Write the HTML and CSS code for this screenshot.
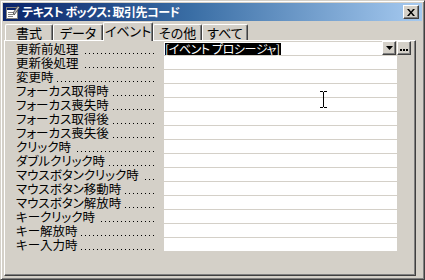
FILE: index.html
```html
<!DOCTYPE html>
<html lang="ja">
<head>
<meta charset="utf-8">
<link rel="stylesheet" href="styles.css">
</head>
<body>
<div class="window">
  <div class="titlebar">
    <svg class="ticon" width="16" height="16" viewBox="0 0 16 16">
      <rect x="2.5" y="3.5" width="11" height="11" fill="#fff" stroke="#808080"/>
      <rect x="3" y="4" width="10" height="2" fill="#0a246a"/>
      <rect x="4" y="8" width="6" height="1" fill="#808080"/>
      <rect x="4" y="10" width="7" height="1" fill="#808080"/>
      <rect x="4" y="12" width="5" height="1" fill="#808080"/>
      <path d="M9 9 L14 2 L15.5 3.5 L10.5 10.5 Z" fill="#c0c0c0" stroke="#404040" stroke-width="0.8"/>
    </svg>
    <span class="title">テキスト ボックス: 取引先コード</span>
    <div class="close">
      <svg width="8" height="7" viewBox="0 0 8 7"><path d="M0 0h2l2 2.5 2-2.5h2l-3 3.5 3 3.5h-2l-2-2.5-2 2.5h-2l3-3.5z" fill="#000"/></svg>
    </div>
  </div>
  <div class="tabs">
    <div class="tab t1">書式</div>
    <div class="tab t2">データ</div>
    <div class="tab t3 active">イベント</div>
    <div class="tab t4">その他</div>
    <div class="tab t5">すべて</div>
  </div>
  <div class="panel">
    <div class="row">
      <div class="label"><span>更新前処理</span></div>
      <div class="combo">
        <div class="input"><span class="sel">[イベント プロシージャ]</span></div>
        <div class="btn drop"><svg width="7" height="4" viewBox="0 0 7 4"><path d="M0 0h7l-3.5 4z" fill="#000"/></svg></div>
        <div class="btn more"><svg width="8" height="2" viewBox="0 0 8 2"><rect x="0" y="0" width="2" height="2"/><rect x="3" y="0" width="2" height="2"/><rect x="6" y="0" width="2" height="2"/></svg></div>
      </div>
    </div>
    <div class="row"><div class="label"><span>更新後処理</span></div><div class="value"></div></div>
    <div class="row"><div class="label"><span>変更時</span></div><div class="value"></div></div>
    <div class="row"><div class="label"><span>フォーカス取得時</span></div><div class="value"></div></div>
    <div class="row"><div class="label"><span>フォーカス喪失時</span></div><div class="value"></div></div>
    <div class="row"><div class="label"><span>フォーカス取得後</span></div><div class="value"></div></div>
    <div class="row"><div class="label"><span>フォーカス喪失後</span></div><div class="value"></div></div>
    <div class="row"><div class="label"><span>クリック時</span></div><div class="value"></div></div>
    <div class="row"><div class="label"><span>ダブルクリック時</span></div><div class="value"></div></div>
    <div class="row"><div class="label"><span>マウスボタンクリック時</span></div><div class="value"></div></div>
    <div class="row"><div class="label"><span>マウスボタン移動時</span></div><div class="value"></div></div>
    <div class="row"><div class="label"><span>マウスボタン解放時</span></div><div class="value"></div></div>
    <div class="row"><div class="label"><span>キークリック時</span></div><div class="value"></div></div>
    <div class="row"><div class="label"><span>キー解放時</span></div><div class="value"></div></div>
    <div class="row"><div class="label"><span>キー入力時</span></div><div class="value"></div></div>
  </div>
  <svg class="cursor" width="9" height="17" viewBox="0 0 9 17">
    <path d="M1 0.5h3M5 0.5h3M4.5 1v15M1 16.5h3M5 16.5h3" stroke="#000" stroke-width="1" fill="none"/>
  </svg>
</div>
</body>
</html>
```

FILE: styles.css
```css
html, body {
  margin: 0;
  padding: 0;
  background: #d4d0c8;
}

.window {
  position: relative;
  width: 425px;
  height: 280px;
  box-sizing: border-box;
  background: #d4d0c8;
  border: 1px solid;
  border-color: #d4d0c8 #404040 #404040 #d4d0c8;
  box-shadow: inset 1px 1px #fff, inset -1px -1px #808080;
  padding: 2px;
  display: flex;
  flex-direction: column;
  font-family: "Noto Sans CJK JP", sans-serif;
  font-feature-settings: "palt";
  font-size: 12.5px;
  color: #000;
}

.titlebar {
  height: 18px;
  flex: none;
  display: flex;
  align-items: center;
  background: linear-gradient(90deg, #0a246a 0%, #3a6ea5 45%, #a6caf0 100%);
  padding-left: 1px;
}

.ticon {
  flex: none;
  margin-right: 2px;
}

.title {
  color: #fff;
  font-weight: bold;
  font-size: 12px;
  letter-spacing: -0.5px;
  line-height: 18px;
  white-space: nowrap;
}

.close {
  margin-left: auto;
  margin-right: 3px;
  width: 16px;
  height: 14px;
  box-sizing: border-box;
  background: #d4d0c8;
  border: 1px solid;
  border-color: #fff #404040 #404040 #fff;
  box-shadow: inset -1px -1px #808080;
  display: flex;
  align-items: center;
  justify-content: center;
  padding-right: 1px;
}

.tabs {
  height: 19px;
  flex: none;
  display: flex;
  align-items: flex-end;
  padding-left: 2px;
  position: relative;
  z-index: 1;
}

.tab {
  height: 16px;
  box-sizing: border-box;
  border: 1px solid;
  border-color: #fff #404040 transparent #fff;
  border-bottom: none;
  border-radius: 2px 2px 0 0;
  box-shadow: inset -1px 0 #808080;
  background: #d4d0c8;
  text-align: center;
  font-size: 13px;
  line-height: 15px;
  white-space: nowrap;
}

.t1 { width: 48px; }
.t2 { width: 50px; }
.t3 { width: 50px; }
.t4 { width: 49px; }
.t5 { width: 46px; }

.tab.active {
  height: 19px;
  margin-bottom: -1px;
  line-height: 16px;
}

.panel {
  flex: 1;
  margin: 0 6px 1px 1px;
  border: 1px solid;
  border-color: #fff #404040 #404040 #fff;
  box-shadow: inset -1px -1px #808080;
  padding: 1px 0 0 11px;
}

.row {
  display: flex;
  height: 13px;
  margin-bottom: 1px;
}

.label {
  width: 139px;
  padding-right: 9px;
  flex: none;
  height: 13px;
  white-space: nowrap;
  background-image: linear-gradient(90deg, #000 1px, transparent 1px);
  background-size: 4px 1px;
  background-repeat: repeat-x;
  background-position: 1px 11px;
  background-origin: content-box;
  background-clip: content-box;
}

.label span {
  display: inline-block;
  vertical-align: top;
  height: 13px;
  line-height: 13px;
  background: #d4d0c8;
  padding-right: 3px;
}

.value {
  width: 233px;
  background: #fff;
}

.combo {
  display: flex;
  height: 13px;
}

.input {
  width: 218px;
  background: #fff;
  padding-left: 1px;
  box-sizing: border-box;
  display: flex;
}

.sel {
  display: inline-block;
  background: #000;
  color: #fff;
  font-size: 12px;
  letter-spacing: -0.4px;
  line-height: 12px;
  height: 12px;
  margin-top: 1px;
  padding-right: 1px;
  white-space: nowrap;
}

.btn {
  width: 14px;
  height: 14px;
  margin-top: -1px;
  box-sizing: border-box;
  background: #d4d0c8;
  border: 1px solid;
  border-color: #fff #404040 #404040 #fff;
  box-shadow: inset -1px -1px #808080;
  display: flex;
  align-items: center;
  justify-content: center;
}

.more {
  margin-left: 1px;
}

.more svg {
  margin-top: 3px;
}

.cursor {
  position: absolute;
  left: 318px;
  top: 90px;
}
```
